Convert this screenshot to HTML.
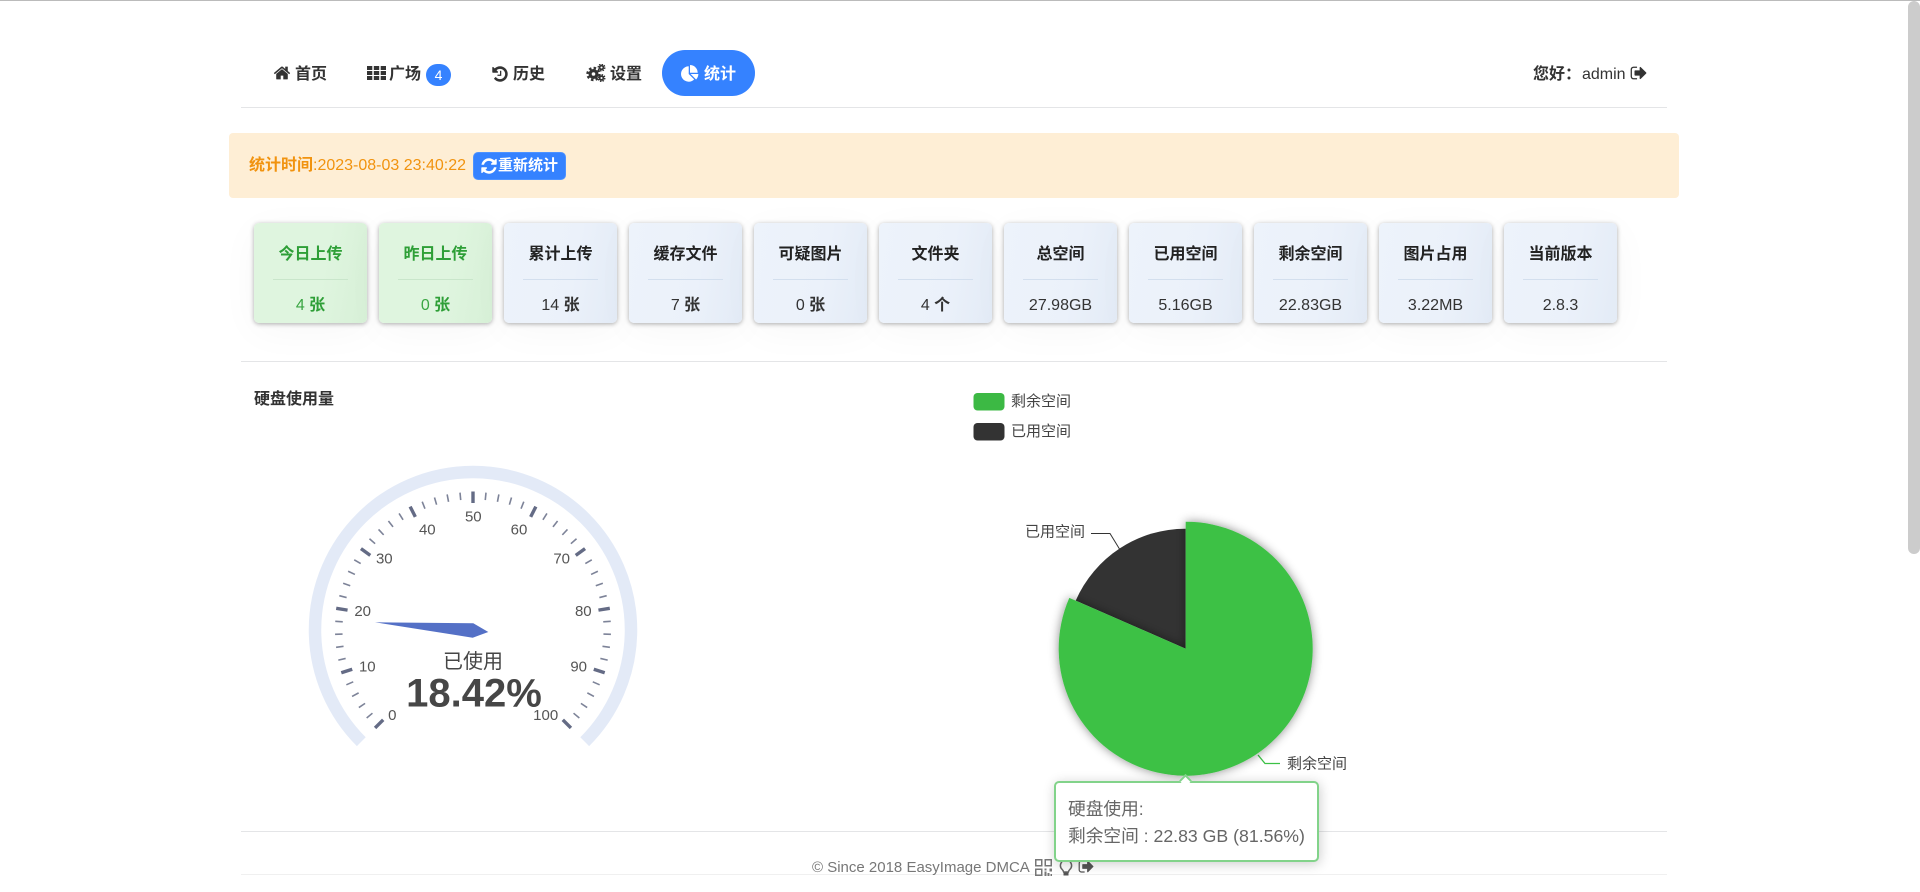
<!DOCTYPE html>
<html lang="zh"><head><meta charset="utf-8"><title>统计</title>
<style>
html,body{margin:0;padding:0;background:#fff;width:1920px;height:892px;overflow:hidden}
body{position:relative;font-family:"Liberation Sans","Noto Sans CJK SC",sans-serif;font-size:16px;color:#333}
.a{position:absolute;white-space:nowrap}
.n{font-weight:700;color:#333;line-height:24px;top:63px}
.i{position:absolute;fill:currentColor}
.hr{position:absolute;left:241px;width:1426px;height:1px;background:#e4e5e7}
.c{position:absolute;top:223px;width:113px;height:100px;border-radius:5px;background:linear-gradient(100deg,#edf3fb 0%,#ebf1fa 60%,#e3ebf6 100%);box-shadow:0 1px 5px rgba(0,0,0,.32),0 8px 40px rgba(0,0,0,.035);text-align:center;color:#333}
.c b{position:absolute;left:0;right:0;top:20px;line-height:24px;color:#222}
.c i{position:absolute;left:19px;width:75px;top:56px;height:1px;background:#d3dfee}
.c span{position:absolute;left:0;right:0;top:71px;line-height:24px}
.c span b{position:static;color:inherit}
.g{background:linear-gradient(100deg,#dff5df 0%,#dff5df 60%,#d7f0d7 100%)}
.g,.g b{color:#2e9f37!important}.g span{color:#3aa643}.g i{background:#c9e6cb}
svg text{font-family:"Liberation Sans","Noto Sans CJK SC",sans-serif}
</style></head><body>
<div class="a" style="left:0;top:0;width:1920px;height:1px;background:#bbb"></div>
<div class="a" style="left:1908px;top:1px;width:12px;height:553px;background:#ccc;border-radius:6px"></div>

<!-- nav -->
<svg class="i" style="left:273px;top:64px;color:#333" width="18" height="18" viewBox="0 0 1792 1792"><path d="M1472 992v480q0 26-19 45t-45 19h-384v-384h-256v384h-384q-26 0-45-19t-19-45v-480q0-1 .5-3t.5-3l575-474 575 474q1 2 1 6zm223-69l-62 74q-8 9-21 11h-3q-13 0-21-7l-692-577-692 577q-12 8-24 7-13-2-21-11l-62-74q-8-10-7-23.5t11-21.5l719-599q32-26 76-26t76 26l244 204v-195q0-14 9-23t23-9h192q14 0 23 9t9 23v408l219 182q10 8 11 21.5t-7 23.5z"/></svg>
<span class="a n" style="left:295px">首页</span>
<svg class="i" style="left:367px;top:66px;color:#333" width="19" height="14" viewBox="0 0 19 14"><path d="M0 0h5.300v4H0zM6.800 0h5.400v4H6.800zM13.700 0H19v4h-5.300zM0 5h5.300v4H0zM6.800 5h5.400v4H6.800zM13.700 5H19v4h-5.300zM0 10h5.300v4H0zM6.800 10h5.400v4H6.800zM13.700 10H19v4h-5.300z"/></svg>
<span class="a n" style="left:389px">广场</span>
<span class="a" style="left:426px;top:64px;width:25px;height:22px;border-radius:11px;background:#3582ff;color:#fff;text-align:center;font-size:14px;line-height:22px">4</span>
<svg class="i" style="left:491px;top:65px;color:#333" width="18" height="18" viewBox="0 0 1792 1792"><path d="M1664 896q0 156-61 298t-164 245-245 164-298 61q-172 0-327-72.500t-264-204.500q-7-10-6.500-22.500t8.500-20.500l137-138q10-9 25-9 16 2 23 12 73 95 179 147t225 52q104 0 198.500-40.500t163.500-109.500 109.500-163.500 40.500-198.500-40.500-198.500-109.500-163.500-163.500-109.500-198.500-40.500q-98 0-188 35.500t-160 101.500l137 138q31 30 14 69-17 40-59 40h-448q-26 0-45-19t-19-45v-448q0-42 40-59 39-17 69 14l130 129q107-101 244.500-156.500t284.500-55.500q156 0 298 61t245 164 164 245 61 298zm-640-288v448q0 14-9 23t-23 9h-320q-14 0-23-9t-9-23v-64q0-14 9-23t23-9h224v-352q0-14 9-23t23-9h64q14 0 23 9t9 23z"/></svg>
<span class="a n" style="left:513px">历史</span>
<svg style="position:absolute;left:585px;top:64px" width="21" height="18" viewBox="0 0 21 18" fill="none" stroke="#333"><circle cx="8.500" cy="10" r="3.400" stroke-width="3.200"/><circle cx="8.500" cy="10" r="6" stroke-width="2.400" stroke-dasharray="2.500 2.200"/><circle cx="16.500" cy="3.500" r="1.900" stroke-width="1.700"/><circle cx="16.500" cy="3.500" r="3.300" stroke-width="1.400" stroke-dasharray="1.500 1.090"/><circle cx="16.500" cy="14" r="1.900" stroke-width="1.700"/><circle cx="16.500" cy="14" r="3.300" stroke-width="1.400" stroke-dasharray="1.500 1.090"/></svg>
<span class="a n" style="left:610px">设置</span>
<div class="a" style="left:662px;top:50px;width:93px;height:46px;border-radius:23px;background:#3582ff"></div>
<svg class="i" style="left:681px;top:65px;color:#fff" width="18" height="18" viewBox="0 0 1792 1792"><path d="M768 890l546 546q-106 108-247.500 168t-298.500 60q-209 0-385.500-103t-279.500-279.500-103-385.500 103-385.500 279.500-279.500 385.500-103v762zm187 6h773q0 157-60 298.500t-168 247.500zm709-128h-768v-768q209 0 385.500 103t279.500 279.500 103 385.500z"/></svg>
<span class="a n" style="left:704px;color:#fff">统计</span>
<span class="a n" style="left:1533px">您好：</span>
<span class="a" style="left:1582px;top:63px;line-height:24px;color:#333">admin</span>
<svg class="i" style="left:1630px;top:64px;color:#333" width="18" height="18" viewBox="0 0 1792 1792"><path d="M704 1440q0 4 1 20t.5 26.500-3 23.500-10 19.500-20.500 6.500h-320q-119 0-203.500-84.500t-84.500-203.500v-704q0-119 84.500-203.500t203.500-84.500h320q13 0 22.500 9.500t9.500 22.500q0 4 1 20t.5 26.500-3 23.500-10 19.500-20.500 6.500h-320q-66 0-113 47t-47 113v704q0 66 47 113t113 47h312l11.500 1 11.500 3 8 5.500 7 9 2 13.500zm928-544q0 26-19 45l-544 544q-19 19-45 19t-45-19-19-45v-288h-448q-26 0-45-19t-19-45v-384q0-26 19-45t45-19h448v-288q0-26 19-45t45-19 45 19l544 544q19 19 19 45z"/></svg>
<div class="hr" style="top:107px"></div>

<!-- cards -->
<div class="c g" style="left:254px"><b>今日上传</b><i></i><span>4 <b>张</b></span></div>
<div class="c g" style="left:379px"><b>昨日上传</b><i></i><span>0 <b>张</b></span></div>
<div class="c" style="left:504px"><b>累计上传</b><i></i><span>14 <b>张</b></span></div>
<div class="c" style="left:629px"><b>缓存文件</b><i></i><span>7 <b>张</b></span></div>
<div class="c" style="left:754px"><b>可疑图片</b><i></i><span>0 <b>张</b></span></div>
<div class="c" style="left:879px"><b>文件夹</b><i></i><span>4 <b>个</b></span></div>
<div class="c" style="left:1004px"><b>总空间</b><i></i><span>27.98GB</span></div>
<div class="c" style="left:1129px"><b>已用空间</b><i></i><span>5.16GB</span></div>
<div class="c" style="left:1254px"><b>剩余空间</b><i></i><span>22.83GB</span></div>
<div class="c" style="left:1379px"><b>图片占用</b><i></i><span>3.22MB</span></div>
<div class="c" style="left:1504px"><b>当前版本</b><i></i><span>2.8.3</span></div>

<!-- alert -->
<div class="a" style="left:229px;top:133px;width:1450px;height:65px;background:#feeed5;border-radius:4px"></div>
<span class="a" style="left:249px;top:154px;line-height:24px;color:#f1930f"><b>统计时间</b>:2023-08-03 23:40:22</span>
<div class="a" style="left:472.500px;top:152px;width:93.500px;height:28px;box-sizing:border-box;background:#3582ff;border:1px solid #4d92ff;border-radius:5px"></div>
<svg class="i" style="left:480px;top:156.500px;color:#fff" width="18" height="18" viewBox="0 0 1792 1792"><path d="M1639 1056q0 5-1 7-64 268-268 434.500t-478 166.500q-146 0-282.500-55t-243.500-157l-129 129q-19 19-45 19t-45-19-19-45v-448q0-26 19-45t45-19h448q26 0 45 19t19 45-19 45l-137 137q71 66 161 102t187 36q134 0 250-65t186-179q11-17 53-117 8-23 30-23h192q13 0 22.500 9.500t9.500 22.500zm25-800v448q0 26-19 45t-45 19h-448q-26 0-45-19t-19-45 19-45l138-138q-148-137-349-137-134 0-250 65t-186 179q-11 17-53 117-8 23-30 23h-199q-13 0-22.500-9.500t-9.500-22.500v-7q65-268 270-434.500t480-166.500q146 0 284 55.500t245 156.500l130-129q19-19 45-19t45 19 19 45z"/></svg>
<span class="a" style="left:498px;top:154px;line-height:24px;font-size:15px;font-weight:700;color:#fff">重新统计</span>

<div class="hr" style="top:361px"></div>
<span class="a" style="left:254px;top:388px;line-height:24px;font-weight:700;color:#333">硬盘使用量</span>

<!-- gauge + pie -->
<svg style="position:absolute;left:0;top:0" width="1920" height="892" viewBox="0 0 1920 892">
<defs>
<line id="t" x1="473" y1="492" x2="473" y2="499.500" stroke="#7d8398" stroke-width="1.600"/>
<line id="T" x1="473" y1="491.500" x2="473" y2="503" stroke="#646b85" stroke-width="3.400"/>
<filter id="s" x="-20%" y="-20%" width="140%" height="140%"><feDropShadow dx="0" dy="0" stdDeviation="5" flood-color="#000" flood-opacity=".45"/></filter>
</defs>
<path d="M361.300 741.700A158 158 0 1 1 584.700 741.700" fill="none" stroke="#e3eaf7" stroke-width="12.500"/>
<g>
<use href="#T" transform="rotate(-135 473 630)"/><use href="#T" transform="rotate(-108 473 630)"/><use href="#T" transform="rotate(-81 473 630)"/><use href="#T" transform="rotate(-54 473 630)"/><use href="#T" transform="rotate(-27 473 630)"/><use href="#T"/><use href="#T" transform="rotate(27 473 630)"/><use href="#T" transform="rotate(54 473 630)"/><use href="#T" transform="rotate(81 473 630)"/><use href="#T" transform="rotate(108 473 630)"/><use href="#T" transform="rotate(135 473 630)"/>
<use href="#t" transform="rotate(-129.600 473 630)"/><use href="#t" transform="rotate(-124.200 473 630)"/><use href="#t" transform="rotate(-118.800 473 630)"/><use href="#t" transform="rotate(-113.400 473 630)"/>
<use href="#t" transform="rotate(-102.600 473 630)"/><use href="#t" transform="rotate(-97.200 473 630)"/><use href="#t" transform="rotate(-91.800 473 630)"/><use href="#t" transform="rotate(-86.400 473 630)"/>
<use href="#t" transform="rotate(-75.600 473 630)"/><use href="#t" transform="rotate(-70.200 473 630)"/><use href="#t" transform="rotate(-64.800 473 630)"/><use href="#t" transform="rotate(-59.400 473 630)"/>
<use href="#t" transform="rotate(-48.600 473 630)"/><use href="#t" transform="rotate(-43.200 473 630)"/><use href="#t" transform="rotate(-37.800 473 630)"/><use href="#t" transform="rotate(-32.400 473 630)"/>
<use href="#t" transform="rotate(-21.600 473 630)"/><use href="#t" transform="rotate(-16.200 473 630)"/><use href="#t" transform="rotate(-10.800 473 630)"/><use href="#t" transform="rotate(-5.400 473 630)"/>
<use href="#t" transform="rotate(5.400 473 630)"/><use href="#t" transform="rotate(10.800 473 630)"/><use href="#t" transform="rotate(16.200 473 630)"/><use href="#t" transform="rotate(21.600 473 630)"/>
<use href="#t" transform="rotate(32.400 473 630)"/><use href="#t" transform="rotate(37.800 473 630)"/><use href="#t" transform="rotate(43.200 473 630)"/><use href="#t" transform="rotate(48.600 473 630)"/>
<use href="#t" transform="rotate(59.400 473 630)"/><use href="#t" transform="rotate(64.800 473 630)"/><use href="#t" transform="rotate(70.200 473 630)"/><use href="#t" transform="rotate(75.600 473 630)"/>
<use href="#t" transform="rotate(86.400 473 630)"/><use href="#t" transform="rotate(91.800 473 630)"/><use href="#t" transform="rotate(97.200 473 630)"/><use href="#t" transform="rotate(102.600 473 630)"/>
<use href="#t" transform="rotate(113.400 473 630)"/><use href="#t" transform="rotate(118.800 473 630)"/><use href="#t" transform="rotate(124.200 473 630)"/><use href="#t" transform="rotate(129.600 473 630)"/>
</g>
<g font-size="15" fill="#555" text-anchor="middle" dominant-baseline="central">
<text x="392.300" y="715.500">0</text><text x="367.300" y="667.200">10</text><text x="362.700" y="611.500">20</text><text x="384.300" y="559.200">30</text><text x="427.300" y="529.800">40</text><text x="473.300" y="517.200">50</text><text x="519" y="529.800">60</text><text x="561.700" y="559.200">70</text><text x="583.300" y="611.500">80</text><text x="578.700" y="667.200">90</text><text x="545.700" y="715.500">100</text>
</g>
<polygon points="375,622.300 473.300,623.300 488.300,632 472.700,637.700" fill="#5470c6"/>
<text x="473" y="662" font-size="20" fill="#464646" text-anchor="middle" dominant-baseline="central">已使用</text>
<text x="474" y="693.500" font-size="40" font-weight="700" fill="#464646" text-anchor="middle" dominant-baseline="central">18.42%</text>

<rect x="973.500" y="393" width="31" height="17.500" rx="4" fill="#3cb944"/>
<rect x="973.500" y="423" width="31" height="17.500" rx="4" fill="#333"/>
<g font-size="15" fill="#444" dominant-baseline="central">
<text x="1011" y="401.500">剩余空间</text><text x="1011" y="431.500">已用空间</text>
<text x="1025" y="532">已用空间</text><text x="1287" y="764">剩余空间</text>
</g>
<path d="M1091 533.500H1110L1119.500 549" fill="none" stroke="#333"/>
<path d="M1258 755L1265 763.500H1280" fill="none" stroke="#3cc145" stroke-width="1.300"/>
<path d="M1185.700 648.700L1075.700 600.600A120 120 0 0 1 1185.700 528.700Z" fill="#333"/>
<path d="M1185.700 648.700V521.700A127 127 0 1 1 1069.300 597.900Z" fill="#3cc145" filter="url(#s)"/>
</svg>

<!-- footer -->
<div class="hr" style="top:831px"></div>
<div class="a" style="left:241px;top:874px;width:1426px;height:1px;background:#f0f0f0"></div>
<span class="a" style="left:812px;top:854px;line-height:27px;font-size:15px;color:#777">© Since 2018 EasyImage DMCA</span>
<svg style="position:absolute;left:1035px;top:859px" width="17" height="17" viewBox="0 0 17 17" fill="#777"><path fill-rule="evenodd" d="M0 0h7.500v7.500H0zM1.500 1.500v4.500h4.500V1.500zM9.500 0H17v7.500H9.500zM11 1.500v4.500h4.500V1.500zM0 9.500h7.500V17H0zM1.500 11v4.500h4.500V11z"/><path d="M9.500 9.500h2v2h-2zM12.500 9.500h2v3h2.500v-3h-2zM9.500 12.500h2v4.500h-2zM12.500 14h2v3h-2zM15.500 15h1.500v2h-1.500z"/></svg>
<svg style="position:absolute;left:1059px;top:859px" width="14" height="17" viewBox="0 0 14 17"><path d="M7 1a5.500 5.500 0 0 0-3.800 9.500C4.300 11.600 4.500 12.500 4.600 13h4.800c.1-.5.300-1.400 1.400-2.500A5.500 5.500 0 0 0 7 1z" fill="none" stroke="#666" stroke-width="1.500"/><path d="M4.500 13.500h5v3h-5z" fill="#555"/></svg>
<svg class="i" style="left:1078px;top:858px;color:#555" width="17" height="17" viewBox="0 0 1792 1792"><path d="M704 1440q0 4 1 20t.5 26.500-3 23.500-10 19.500-20.500 6.500h-320q-119 0-203.500-84.500t-84.500-203.500v-704q0-119 84.500-203.500t203.500-84.500h320q13 0 22.500 9.500t9.500 22.500q0 4 1 20t.5 26.500-3 23.500-10 19.500-20.500 6.500h-320q-66 0-113 47t-47 113v704q0 66 47 113t113 47h312l11.500 1 11.500 3 8 5.500 7 9 2 13.500zm928-544q0 26-19 45l-544 544q-19 19-45 19t-45-19-19-45v-288h-448q-26 0-45-19t-19-45v-384q0-26 19-45t45-19h448v-288q0-26 19-45t45-19 45 19l544 544q19 19 19 45z"/></svg>

<!-- tooltip -->
<div class="a" style="left:1054px;top:781px;width:265px;height:81px;box-sizing:border-box;background:#fff;border:2px solid #82d38a;border-radius:5px;box-shadow:1px 2px 12px rgba(0,0,0,.2)"></div>
<div class="a" style="left:1181px;top:776px;width:9px;height:9px;box-sizing:border-box;background:#fff;border-left:2px solid #82d38a;border-top:2px solid #82d38a;transform:rotate(45deg)"></div>
<div class="a" style="left:1068px;top:796px;line-height:27px;font-size:17.700px;color:#666">硬盘使用:<br>剩余空间 : 22.83 GB (81.56%)</div>
</body></html>
